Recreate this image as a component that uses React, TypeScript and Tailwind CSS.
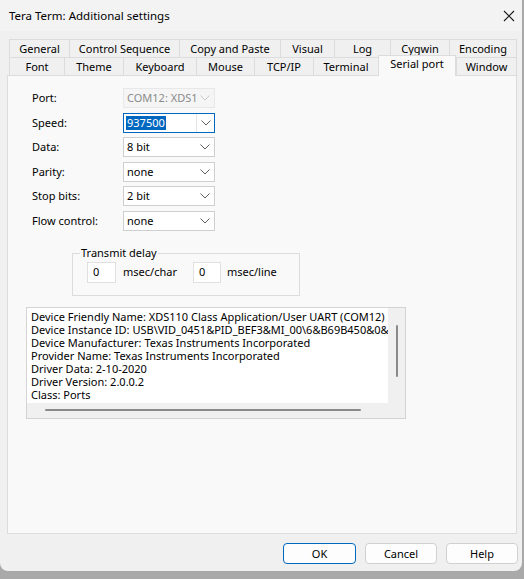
import React from "react";

const font = { fontFamily: '"Noto Sans", sans-serif' };

function Chevron({ color = "#5f5f5f" }: { color?: string }) {
  return (
    <svg width="10" height="6" viewBox="0 0 10 6" fill="none">
      <path d="M0.5 0.5 L5 5 L9.5 0.5" stroke={color} strokeWidth="1" />
    </svg>
  );
}

function Select({ value, disabled, selected }: { value: string; disabled?: boolean; selected?: boolean }) {
  const border = disabled
    ? "border-[#e8e8e8] bg-[#f5f5f5]"
    : selected
    ? "border-[#0067c0] bg-white"
    : "border-[#cfcfcf] bg-white";
  return (
    <div className={`flex h-[20px] w-[92px] items-center border ${border}`}>
      <div className={`flex-1 overflow-hidden whitespace-nowrap pl-[2px] text-[11px] leading-[14px] ${disabled ? "text-[#8a8a8a]" : "text-black"}`}>
        {selected ? <span className="bg-[#0067c0] px-[1px] text-white">{value}</span> : <span className="pl-[1px]">{value}</span>}
      </div>
      <div className={`flex h-full w-[18px] shrink-0 items-center justify-center ${selected ? "border-l border-[#e5e5e5]" : ""}`}>
        <Chevron color={disabled ? "#c8c8c8" : "#5f5f5f"} />
      </div>
    </div>
  );
}

const row1 = [
  ["General", 60],
  ["Control Sequence", 110],
  ["Copy and Paste", 101],
  ["Visual", 54],
  ["Log", 56],
  ["Cygwin", 59],
  ["Encoding", 68],
] as const;

const row2 = [
  ["Font", 55],
  ["Theme", 59],
  ["Keyboard", 73],
  ["Mouse", 58],
  ["TCP/IP", 59],
  ["Terminal", 65],
  ["Serial port", 78],
  ["Window", 61],
] as const;

const rows = [
  ["Port:", "COM12: XDS110 Class", "disabled"],
  ["Speed:", "937500", "selected"],
  ["Data:", "8 bit", ""],
  ["Parity:", "none", ""],
  ["Stop bits:", "2 bit", ""],
  ["Flow control:", "none", ""],
] as const;

const info = [
  "Device Friendly Name: XDS110 Class Application/User UART (COM12)",
  "Device Instance ID: USB\\VID_0451&PID_BEF3&MI_00\\6&B69B450&0&0000",
  "Device Manufacturer: Texas Instruments Incorporated",
  "Provider Name: Texas Instruments Incorporated",
  "Driver Data: 2-10-2020",
  "Driver Version: 2.0.0.2",
  "Class: Ports",
];

export default function App() {
  return (
    <div className="h-[579px] w-[524px] overflow-hidden bg-[#a9a9a9]" style={font}>
      <div className="flex h-[571px] w-[522px] flex-col rounded-b-[8px] bg-[#f0f0f0] text-[11px] leading-[14px] text-black">
        {/* Title bar */}
        <div className="flex h-[31px] items-center justify-between bg-[#f3f3f3] pl-[9px] pr-[6px]">
          <span className="text-[11.5px]">Tera Term: Additional settings</span>
          <svg width="12" height="12" viewBox="0 0 12 12" className="mr-[1px]">
            <path d="M1 1 L11 11 M11 1 L1 11" stroke="#1a1a1a" strokeWidth="1.1" />
          </svg>
        </div>
        {/* Tabs */}
        <div className="mt-[8px] flex flex-col pl-[9px]">
          <div className="flex h-[18px]">
            {row1.map(([t, w]) => (
              <div
                key={t}
                style={{ width: w }}
                className="flex items-center justify-center border-l border-t border-[#dcdcdc] last:border-r"
              >
                {t}
              </div>
            ))}
          </div>
          <div className="flex h-[18px] items-end">
            {row2.map(([t, w]) =>
              t === "Serial port" ? (
                <div
                  key={t}
                  style={{ width: w }}
                  className="relative z-10 -mb-[1px] flex h-[21px] items-start justify-center border-l border-r border-t border-[#dcdcdc] bg-[#f9f9f9] pt-[1px]"
                >
                  {t}
                </div>
              ) : (
                <div
                  key={t}
                  style={{ width: w }}
                  className="flex h-[18px] items-center justify-center border-l border-t border-[#dcdcdc] last:border-r"
                >
                  {t}
                </div>
              )
            )}
          </div>
        </div>
        {/* Panel */}
        <div className="ml-[7px] h-[459px] w-[510px] border border-[#dcdcdc] bg-[#f9f9f9]">
          <div className="flex flex-col gap-[4.5px] pl-[24px] pt-[12px]">
            {rows.map(([l, v, s]) => (
              <div key={l} className="flex h-[20px] items-center">
                <span className="w-[91px]">{l}</span>
                <Select value={v} disabled={s === "disabled"} selected={s === "selected"} />
              </div>
            ))}
          </div>
          {/* Transmit delay */}
          <div className="relative ml-[64px] mt-[22px] h-[43px] w-[228px] border border-[#dcdcdc]">
            <span className="absolute -top-[8px] left-[7px] bg-[#f9f9f9] px-[1px] leading-[14px]">Transmit delay</span>
            <div className="flex items-center pl-[14px] pt-[8px]">
              <div className="flex h-[21px] w-[29px] items-center border border-[#e0e0e0] bg-white pl-[5px]">0</div>
              <span className="ml-[7px]">msec/char</span>
              <div className="ml-[16px] flex h-[21px] w-[28px] items-center border border-[#e0e0e0] bg-white pl-[5px]">0</div>
              <span className="ml-[6px]">msec/line</span>
            </div>
          </div>
          {/* Info box */}
          <div className="ml-[18px] mt-[11px] flex h-[112px] w-[380px] flex-col border border-[#d4d4d4] bg-[#f0f0f0]">
            <div className="flex h-[95px]">
              <div className="h-full w-[361px] overflow-hidden bg-white pl-[4px] pt-[2px]">
                {info.map((line) => (
                  <div key={line} className="whitespace-nowrap leading-[13px]">
                    {line}
                  </div>
                ))}
              </div>
              <div className="flex flex-1 justify-center pt-[17px]">
                <div className="h-[52px] w-[2px] rounded bg-[#8a8a8a]" />
              </div>
            </div>
            <div className="flex flex-1 items-start pl-[18px] pt-[6px]">
              <div className="h-[2px] w-[316px] rounded bg-[#8a8a8a]" />
            </div>
          </div>
        </div>
        {/* Buttons */}
        <div className="mt-[9px] flex justify-end gap-[9px] pr-[4px]">
          <button className="h-[21px] w-[73px] rounded-[4px] border border-[#0067c0] bg-[#fdfdfd]">OK</button>
          <button className="h-[21px] w-[72px] rounded-[4px] border border-[#d0d0d0] bg-[#fdfdfd]">Cancel</button>
          <button className="h-[21px] w-[72px] rounded-[4px] border border-[#d0d0d0] bg-[#fdfdfd]">Help</button>
        </div>
      </div>
    </div>
  );
}
